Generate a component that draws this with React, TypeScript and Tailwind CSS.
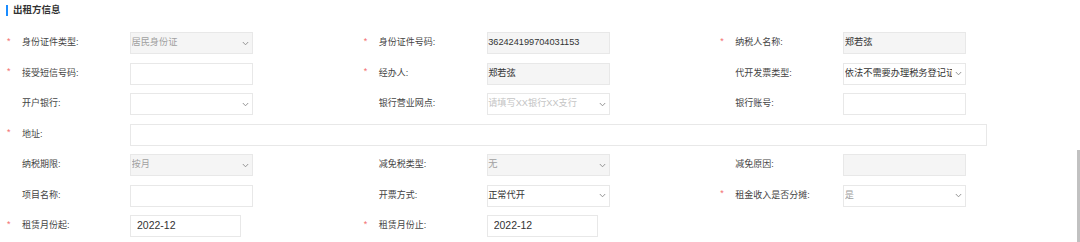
import React from "react";

type Kind = "select" | "input" | "date";

interface FieldProps {
  label: string;
  required?: boolean;
  kind?: Kind;
  value?: string;
  placeholder?: string;
  disabled?: boolean;
  muted?: boolean;
  wide?: boolean;
}

function Chevron() {
  return (
    <svg width="7" height="5" viewBox="0 0 7 5" className="shrink-0">
      <path d="M0.8 1 L3.5 3.8 L6.2 1" fill="none" stroke="#8a8a8a" strokeWidth="0.9" />
    </svg>
  );
}

function Field({ label, required, kind = "input", value, placeholder, disabled, muted, wide }: FieldProps) {
  const box = disabled ? "bg-[#f5f5f5]" : "bg-white";
  const width = wide ? "w-[857px]" : kind === "date" ? "w-[111px]" : "w-[123px]";
  const textColor = muted ? "text-[#a0a0a0]" : "text-[#333]";
  return (
    <div className="flex items-center h-[22px]">
      <div className="w-[22px] pl-[7px] -mt-[3px] text-[9px] text-[#f36d6d]">{required ? "*" : ""}</div>
      <div className="w-[108px] text-[9px] text-[#444] whitespace-nowrap">{label}:</div>
      <div
        className={`${width} h-[22px] ${box} border border-[#e8e8e8] flex items-center overflow-hidden ${
          kind === "date" ? "pl-[6px] text-[10.5px]" : "pl-[0.5px] text-[9.2px]"
        } ${textColor}`}
      >
        <span className="flex-1 min-w-0 whitespace-nowrap overflow-hidden">
          {value ?? <span className="text-[#c4c4c4]">{placeholder}</span>}
        </span>
        {kind === "select" && (
          <span className="px-[3px] flex items-center">
            <Chevron />
          </span>
        )}
      </div>
    </div>
  );
}

export default function App() {
  return (
    <div
      className="relative w-[1080px] h-[242px] bg-white overflow-hidden"
      style={{ fontFamily: '"Liberation Sans", "Noto Sans CJK SC", sans-serif' }}
    >
      <div className="flex items-center pl-[6px] pt-[4px] h-[16px]">
        <div className="w-[2px] h-[11px] bg-[#1a8cff]" />
        <div className="ml-[5px] text-[9.5px] font-bold text-[#333] leading-none">出租方信息</div>
      </div>

      <div className="mt-[16px] w-[1070px] grid grid-cols-3 gap-y-[8.5px]">
        <Field label="身份证件类型" required kind="select" value="居民身份证" disabled muted />
        <Field label="身份证件号码" required value="362424199704031153" disabled />
        <Field label="纳税人名称" required value="郑若弦" disabled />

        <Field label="接受短信号码" required />
        <Field label="经办人" required value="郑若弦" disabled />
        <Field label="代开发票类型" kind="select" value="依法不需要办理税务登记证的" />

        <Field label="开户银行" kind="select" value="" />
        <Field label="银行营业网点" kind="select" placeholder="请填写XX银行XX支行" />
        <Field label="银行账号" />

        <div className="col-span-3">
          <Field label="地址" required wide />
        </div>

        <Field label="纳税期限" kind="select" value="按月" disabled muted />
        <Field label="减免税类型" kind="select" value="无" disabled muted />
        <Field label="减免原因" disabled />

        <Field label="项目名称" />
        <Field label="开票方式" kind="select" value="正常代开" />
        <Field label="租金收入是否分摊" required kind="select" value="是" muted />

        <Field label="租赁月份起" required kind="date" value="2022-12" />
        <Field label="租赁月份止" required kind="date" value="2022-12" />
        <div />
      </div>

      {/* scrollbar thumb */}
      <div className="absolute right-0 top-[150px] w-[3px] h-[92px] bg-[#c1c1c1]" />
    </div>
  );
}
